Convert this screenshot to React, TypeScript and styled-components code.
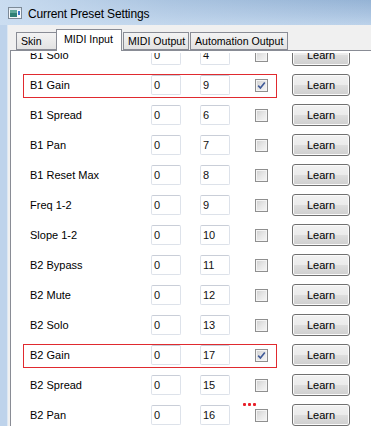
import React from "react";
import styled, { createGlobalStyle } from "styled-components";

const GlobalStyle = createGlobalStyle`
  html, body, #root { margin: 0; padding: 0; height: 100%; }
  body { overflow: hidden; background: #f0f0f0; font-family: "Liberation Sans", Arial, sans-serif; }
  * { box-sizing: border-box; }
`;

const Window = styled.div`
  display: flex;
  flex-direction: column;
  width: 371px;
  height: 426px;
  overflow: hidden;
`;

const TitleBar = styled.div`
  height: 25px;
  flex: none;
  display: flex;
  align-items: center;
  padding-left: 8px;
  gap: 6px;
  background:
    linear-gradient(to right, rgba(204, 222, 241, 0.95) 0%, rgba(204, 222, 241, 0.4) 45%, rgba(204, 222, 241, 0) 100%),
    linear-gradient(to bottom, #95b3d5 0%, #a9c3e0 55%, #bcd2ea 100%);
`;

const TitleText = styled.span`
  font-family: "Liberation Sans", Arial, sans-serif;
  font-size: 12px;
  letter-spacing: -0.15px;
  color: #000;
  padding-top: 2px;
`;

const Body = styled.div`
  flex: 1;
  display: flex;
  min-height: 0;
`;

const LeftFrame = styled.div`
  width: 8px;
  flex: none;
  background: #bed3eb;
  border-right: 1px solid #dce7f3;
`;

const Client = styled.div`
  flex: 1;
  display: flex;
  flex-direction: column;
  background: #f0f0f0;
  min-width: 0;
`;

const TabStrip = styled.div`
  height: 25px;
  flex: none;
  display: flex;
  align-items: flex-end;
  padding-left: 4px;
  position: relative;
  z-index: 1;
`;

const Tab = styled.div<{ $w: number; $ml: number; $active?: boolean }>`
  width: ${(p) => p.$w}px;
  margin-left: ${(p) => p.$ml}px;
  height: ${(p) => (p.$active ? 22 : 18)}px;
  margin-bottom: ${(p) => (p.$active ? -1 : 0)}px;
  display: flex;
  align-items: center;
  padding-left: ${(p) => (p.$active ? 7 : 4)}px;
  padding-bottom: ${(p) => (p.$active ? 3 : 0)}px;
  border: 1px solid #898c95;
  border-bottom: ${(p) => (p.$active ? "none" : "1px solid #898c95")};
  background: ${(p) =>
    p.$active ? "#ffffff" : "linear-gradient(to bottom, #f3f3f3 0%, #ebebeb 50%, #e2e2e2 100%)"};
  font-size: 10.6px;
  color: #000;
  white-space: nowrap;
  overflow: hidden;
  position: relative;
  z-index: ${(p) => (p.$active ? 2 : 1)};
`;

const Panel = styled.div`
  flex: 1;
  display: flex;
  flex-direction: column;
  margin-left: 2px;
  padding-top: 2px;
  border-left: 1px solid #898c95;
  border-top: 1px solid #898c95;
  background: #ffffff;
  min-height: 0;
`;

const Viewport = styled.div`
  flex: 1;
  overflow: hidden;
  min-height: 0;
`;

const List = styled.div`
  margin-top: -13px;
  display: flex;
  flex-direction: column;
`;

const Row = styled.div`
  position: relative;
  height: 30px;
  flex: none;
  display: flex;
  align-items: center;
  padding-left: 12px;
`;

const Group = styled.div<{ $highlight?: boolean }>`
  width: 254px;
  height: 24px;
  margin-top: 2px;
  padding: 0 0 2px 6px;
  display: flex;
  align-items: center;
  border: 1px solid ${(p) => (p.$highlight ? "#e02a2f" : "transparent")};
`;

const Label = styled.span`
  width: 121px;
  flex: none;
  font-size: 11px;
  color: #000;
  white-space: nowrap;
`;

const Field = styled.div<{ $gap: number }>`
  width: 30px;
  height: 20px;
  flex: none;
  margin-left: ${(p) => p.$gap}px;
  border: 1px solid #dde2ea;
  border-top-color: #c9ced8;
  border-radius: 2px;
  background: #fff;
  font-size: 11px;
  line-height: 18px;
  padding-left: 2px;
  color: #111;
`;

const Check = styled.div<{ $checked?: boolean }>`
  width: 13px;
  height: 13px;
  flex: none;
  margin-left: 25px;
  border: 1px solid #8f8f8f;
  background: linear-gradient(135deg, #cfcfcf 0%, #e6e6e6 50%, #f7f7f7 100%);
  box-shadow: inset 0 0 0 1px #f4f4f4;
  display: flex;
  align-items: center;
  justify-content: center;
`;

const LearnButton = styled.div`
  width: 58px;
  height: 22px;
  flex: none;
  margin-left: 15px;
  border: 1px solid #707070;
  border-radius: 3px;
  background: linear-gradient(to bottom, #f2f2f2 0%, #ebebeb 48%, #dddddd 52%, #cfcfcf 100%);
  box-shadow: inset 0 0 0 1px #fbfbfb;
  display: flex;
  align-items: center;
  justify-content: center;
  font-size: 11px;
  color: #000;
`;

const Dots = styled.div`
  position: absolute;
  left: 232px;
  top: 3px;
  display: flex;
  gap: 2px;
`;

const Dot = styled.span`
  width: 3px;
  height: 3px;
  border-radius: 1px;
  background: #e8202a;
`;

const AppIcon = () => (
  <svg width="14" height="12" viewBox="0 0 14 12">
    <rect x="0.5" y="0.5" width="13" height="11" fill="#f4f7fa" stroke="#7d8a97" />
    <rect x="1" y="1" width="12" height="2" fill="#dbe6f1" />
    <rect x="2" y="3" width="7" height="7" fill="#2f7f74" />
    <rect x="2" y="3" width="7" height="3" fill="#5fa89a" />
    <rect x="10" y="4" width="2" height="4" fill="#3b74c8" />
  </svg>
);

const CheckMark = () => (
  <svg width="9" height="9" viewBox="0 0 9 9">
    <path d="M1.2 4.6 L3.4 7 L7.8 1.4" fill="none" stroke="#3f5a98" strokeWidth="1.6" />
  </svg>
);

type Item = { label: string; a: string; b: string; checked?: boolean; highlight?: boolean; dots?: boolean };

const items: Item[] = [
  { label: "B1 Solo", a: "0", b: "4" },
  { label: "B1 Gain", a: "0", b: "9", checked: true, highlight: true },
  { label: "B1 Spread", a: "0", b: "6" },
  { label: "B1 Pan", a: "0", b: "7" },
  { label: "B1 Reset Max", a: "0", b: "8" },
  { label: "Freq 1-2", a: "0", b: "9" },
  { label: "Slope 1-2", a: "0", b: "10" },
  { label: "B2 Bypass", a: "0", b: "11" },
  { label: "B2 Mute", a: "0", b: "12" },
  { label: "B2 Solo", a: "0", b: "13" },
  { label: "B2 Gain", a: "0", b: "17", checked: true, highlight: true },
  { label: "B2 Spread", a: "0", b: "15" },
  { label: "B2 Pan", a: "0", b: "16", dots: true },
];

const tabs = [
  { label: "Skin", w: 42, ml: 4 },
  { label: "MIDI Input", w: 66, ml: -2, active: true },
  { label: "MIDI Output", w: 66, ml: 1 },
  { label: "Automation Output", w: 98, ml: 1 },
];

export default function App() {
  return (
    <>
      <GlobalStyle />
      <Window>
        <TitleBar>
          <AppIcon />
          <TitleText>Current Preset Settings</TitleText>
        </TitleBar>
        <Body>
          <LeftFrame />
          <Client>
            <TabStrip>
              {tabs.map((t) => (
                <Tab key={t.label} $w={t.w} $ml={t.ml} $active={t.active}>
                  {t.label}
                </Tab>
              ))}
            </TabStrip>
            <Panel>
              <Viewport>
                <List>
                  {items.map((it) => (
                    <Row key={it.label}>
                      <Group $highlight={it.highlight}>
                        <Label>{it.label}</Label>
                        <Field $gap={0}>{it.a}</Field>
                        <Field $gap={19}>{it.b}</Field>
                        <Check $checked={it.checked}>{it.checked && <CheckMark />}</Check>
                      </Group>
                      <LearnButton>Learn</LearnButton>
                      {it.dots && (
                        <Dots>
                          <Dot />
                          <Dot />
                          <Dot />
                        </Dots>
                      )}
                    </Row>
                  ))}
                </List>
              </Viewport>
            </Panel>
          </Client>
        </Body>
      </Window>
    </>
  );
}
